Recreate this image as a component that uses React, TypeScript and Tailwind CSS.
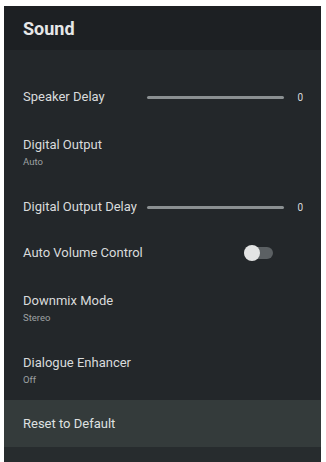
import React from 'react';

const font = { fontFamily: 'Roboto, "Noto Sans", sans-serif' };

const Slider: React.FC<{ label: string; value: number }> = ({ label, value }) => (
  <div className="flex h-[46px] items-center pl-[19px] pr-[18px]">
    <span className="w-[124px] shrink-0 whitespace-nowrap text-[13px] text-[#d9dbdc]">{label}</span>
    <div className="h-[3px] w-[137px] rounded-full bg-[#8b9092]" />
    <span className="ml-auto text-[10px] text-[#d9dbdc]">{value}</span>
  </div>
);

const Option: React.FC<{ label: string; sub: string; h: string }> = ({ label, sub, h }) => (
  <div className={`flex flex-col justify-center pl-[19px] ${h}`}>
    <span className="text-[13px] leading-[16px] text-[#d9dbdc]">{label}</span>
    <span className="mt-[3px] text-[9.5px] leading-[11px] text-[#9da1a3]">{sub}</span>
  </div>
);

export default function App() {
  return (
    <div className="h-[462px] w-[326px] bg-white pl-[4px] pr-[5px] pt-[6px]" style={font}>
      <div className="flex h-full flex-col bg-[#23272a]">
        <div className="flex h-[44px] items-center bg-[#1d2023] pl-[19px]">
          <span className="text-[18px] font-bold text-[#e6e7e8]">Sound</span>
        </div>
        <div className="h-[24px]" />
        <Slider label="Speaker Delay" value={0} />
        <Option label="Digital Output" sub="Auto" h="h-[64px]" />
        <Slider label="Digital Output Delay" value={0} />
        <div className="flex h-[46px] items-center pl-[19px]">
          <span className="w-[221px] text-[13px] text-[#d9dbdc]">Auto Volume Control</span>
          <div className="relative h-[12px] w-[29px] rounded-full bg-[#5b6063]">
            <div className="absolute left-0 top-[-2px] h-[16px] w-[16px] rounded-full bg-[#e3e4e4]" />
          </div>
        </div>
        <Option label="Downmix Mode" sub="Stereo" h="h-[64px]" />
        <Option label="Dialogue Enhancer" sub="Off" h="h-[60px]" />
        <div className="flex h-[47px] items-center bg-[#343b3b] pl-[19px]">
          <span className="text-[13px] text-[#dfe1e1]">Reset to Default</span>
        </div>
        <div className="flex-1 bg-[#272c2e]" />
      </div>
    </div>
  );
}
